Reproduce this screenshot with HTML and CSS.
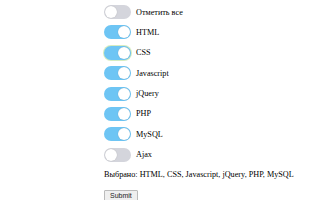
FILE: index.html
```html
<!DOCTYPE html>
<html>
<head>
    <meta charset="utf-8">
    <link rel="stylesheet" href="styles.css">
</head>
<body>
    <div class="skills">
        <label class="row">
            <span class="switch"><span class="knob"></span></span>
            <span class="name">Отметить все</span>
        </label>
        <label class="row">
            <span class="switch on"><span class="knob"></span></span>
            <span class="name">HTML</span>
        </label>
        <label class="row">
            <span class="switch on focus"><span class="knob"></span></span>
            <span class="name">CSS</span>
        </label>
        <label class="row">
            <span class="switch on"><span class="knob"></span></span>
            <span class="name">Javascript</span>
        </label>
        <label class="row">
            <span class="switch on"><span class="knob"></span></span>
            <span class="name">jQuery</span>
        </label>
        <label class="row">
            <span class="switch on"><span class="knob"></span></span>
            <span class="name">PHP</span>
        </label>
        <label class="row">
            <span class="switch on"><span class="knob"></span></span>
            <span class="name">MySQL</span>
        </label>
        <label class="row">
            <span class="switch"><span class="knob"></span></span>
            <span class="name">Ajax</span>
        </label>

        <p class="picked">Выбрано: HTML, CSS, Javascript, jQuery, PHP, MySQL</p>
        <button class="submit">Submit</button>
    </div>
</body>
</html>
```

FILE: styles.css
```css
body {
    margin: 0;
    background: #fff;
    font-family: "Liberation Serif", "Times New Roman", serif;
    font-size: 8.2px;
    color: #000;
}

.skills {
    padding: 5px 0 0 104px;
    display: flex;
    flex-direction: column;
    align-items: flex-start;
}

.row {
    display: flex;
    align-items: center;
    gap: 5px;
    height: 14px;
    margin-bottom: 6.4px;
}

/* переключатель */
.switch {
    width: 27px;
    height: 14px;
    border-radius: 7px;
    background: #d4d5dc;
    display: flex;
    align-items: center;
    padding: 0 1px;
    box-sizing: border-box;
}

    .switch .knob {
        width: 12px;
        height: 12px;
        border-radius: 50%;
        background: #fff;
        box-shadow: 0 0 1px rgba(0, 0, 0, 0.25);
    }

    .switch.on {
        background: #6ec5f4;
        justify-content: flex-end;
    }

    .switch.focus {
        box-shadow: 0 0 0 1px #d7ecc0;
    }

.picked {
    margin: 2px 0 11px;
}

.submit {
    font-family: "Liberation Sans", Arial, sans-serif;
    font-size: 7px;
    padding: 1px 5px;
    background: #efefef;
    border: 1px solid #bbb;
    border-radius: 1px;
    color: #222;
}
```
